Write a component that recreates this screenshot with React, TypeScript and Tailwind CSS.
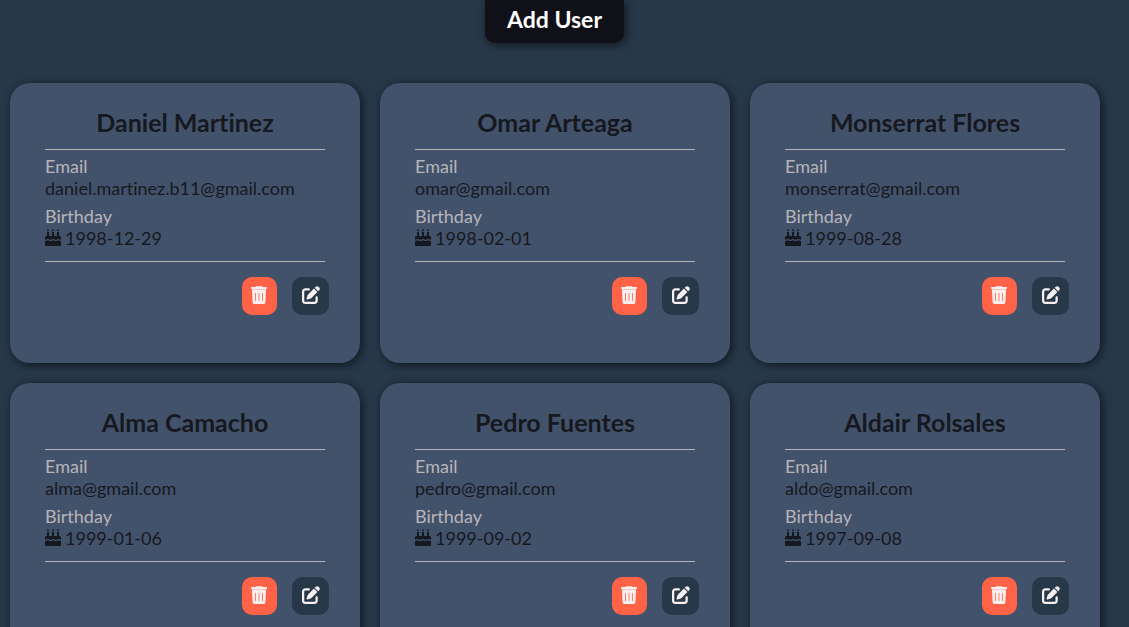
import { FaPenToSquare } from "react-icons/fa6";

type User = { name: string; email: string; birthday: string };

const users: User[] = [
  { name: "Daniel Martinez", email: "daniel.martinez.b11@gmail.com", birthday: "1998-12-29" },
  { name: "Omar Arteaga", email: "omar@gmail.com", birthday: "1998-02-01" },
  { name: "Monserrat Flores", email: "monserrat@gmail.com", birthday: "1999-08-28" },
  { name: "Alma Camacho", email: "alma@gmail.com", birthday: "1999-01-06" },
  { name: "Pedro Fuentes", email: "pedro@gmail.com", birthday: "1999-09-02" },
  { name: "Aldair Rolsales", email: "aldo@gmail.com", birthday: "1997-09-08" },
];

function CakeIcon() {
  return (
    <svg viewBox="0 0 16 18" className="h-[18px] w-4" fill="currentColor" aria-hidden="true">
      <path d="M3 0l1 1.3a1 1 0 1 1-2 0zM8 0l1 1.3a1 1 0 1 1-2 0zM13 0l1 1.3a1 1 0 1 1-2 0z" />
      <path d="M2 3h2v4h3V3h2v4h3V3h2v4h.5A1.5 1.5 0 0 1 16 8.500V10.800c-1.300 0-1.400-.8-2.700-.8s-1.400.8-2.700.8S9.300 10 8 10s-1.300.8-2.600.8S4 10 2.700 10 1.300 10.800 0 10.800V8.500A1.500 1.500 0 0 1 1.500 7H2z" />
      <path d="M0 12c1.300 0 1.400-.8 2.700-.8S4.100 12 5.400 12s1.300-.8 2.600-.8 1.300.8 2.600.8 1.400-.8 2.700-.8S14.700 12 16 12v4.200a.8.8 0 0 1-.8.8H.8a.8.8 0 0 1-.8-.8z" />
    </svg>
  );
}

function TrashIcon() {
  return (
    <svg viewBox="0 0 16 18" className="h-[18px] w-4" fill="currentColor" aria-hidden="true">
      <path d="M5.300.3h5.400l.8.700H15.500q.5 0 .5.500V3H0V1.500Q0 1 .5 1h4z" />
      <path d="M1 3h14v1H1z" opacity="0.7" />
      <path
        fillRule="evenodd"
        d="M1 4h14l-.6 12.300A1.700 1.700 0 0 1 12.700 18H3.300a1.700 1.700 0 0 1-1.700-1.700zM4.100 7v8h.8V7zM7.600 7v8h.8V7zM11.100 7v8h.8V7z"
      />
    </svg>
  );
}

function UserCard({ user }: { user: User }) {
  return (
    <article className="h-[280px] w-[350px] rounded-[20px] bg-[#43526b] px-[35px] pt-[23px] shadow-[2px_2px_10px_rgba(0,0,0,0.6)]">
      <h2 className="text-center text-[25px] leading-8 font-bold">{user.name}</h2>
      <dl className="mt-[11px] border-y border-[#b8b5b9] pt-[5px] pb-3 text-lg leading-[22px]">
        <dt className="text-[#b8b5b9]">Email</dt>
        <dd>{user.email}</dd>
        <dt className="mt-1.5 text-[#b8b5b9]">Birthday</dt>
        <dd className="flex items-center gap-1">
          <CakeIcon />
          {user.birthday}
        </dd>
      </dl>
      <div className="-mr-1 mt-[15px] flex justify-end gap-[15px] text-lg text-[#f8f0f0]">
        <button type="button" aria-label={`Delete ${user.name}`} className="flex h-[38px] w-[35px] items-center justify-center rounded-[10px] bg-[#ff6347] pr-px pb-0.5">
          <TrashIcon />
        </button>
        <button type="button" aria-label={`Edit ${user.name}`} className="flex h-[38px] w-[37px] items-center justify-center rounded-[10px] bg-[#273849] pb-0.5">
          <FaPenToSquare aria-hidden="true" />
        </button>
      </div>
    </article>
  );
}

export default function App() {
  return (
    <div className="min-h-screen bg-[#273849] font-['Lato',sans-serif] text-[#16181f] [font-variant-ligatures:none]">
      <header className="flex justify-center pr-5">
        <button type="button" className="rounded-b-[10px] bg-[#101018] px-[22px] pt-1 pb-[9px] text-[23px] leading-[30px] font-bold text-white shadow-[2px_2px_10px_rgba(0,0,0,0.6)]">
          Add User
        </button>
      </header>
      <main className="flex flex-wrap gap-5 px-2.5 pt-10 pb-5">
        {users.map((user) => (
          <UserCard key={user.email} user={user} />
        ))}
      </main>
    </div>
  );
}
